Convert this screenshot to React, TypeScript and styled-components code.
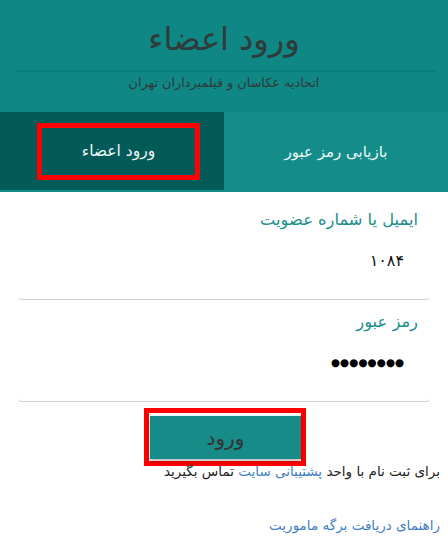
import styled, { createGlobalStyle } from "styled-components";

const GlobalStyle = createGlobalStyle`
	html, body {
		margin:0;
		padding:0;
		background:#fff;
	}
	body {
		font-family:"DejaVu Sans", "Noto Sans", sans-serif;
		direction:rtl;
	}
`;

const Page = styled.div`
	width:448px;
	height:544px;
	overflow:hidden;
	background:#fff;
`;

const Header = styled.header`
	background-color:#0f8785;
	height:112px;
	padding-top:17px;
	box-sizing:border-box;
	text-align:center;
`;

const Title = styled.h1`
	margin:0;
	font-size:32px;
	font-weight:400;
	line-height:44px;
	color:#2f3a3a;
`;

const Divider = styled.hr`
	margin:9px 13px 0 15px;
	border:none;
	border-top:2px solid #0a7c7a;
`;

const Subtitle = styled.p`
	margin:1px 0 0;
	font-size:12.8px;
	line-height:20px;
	color:#2f3a3a;
`;

const Tabs = styled.nav`
	display:grid;
	grid-template-columns:1fr 1fr;
	height:80px;
	border-bottom:2px solid #138c8a;
	box-sizing:border-box;
`;

const Tab = styled.div<{ $active?: boolean }>`
	display:flex;
	align-items:center;
	justify-content:center;
	background-color:${p => (p.$active ? "#035b59" : "#138c8a")};
	color:#eef7f7;
	font-size:15px;
	padding-left:${p => (p.$active ? "13px" : "0")};
	padding-top:${p => (p.$active ? "0" : "2px")};
`;

const Marked = styled.span`
	display:flex;
	align-items:center;
	justify-content:center;
	width:153px;
	height:47px;
	font-size:15.5px;
	border:5px solid #ff0000;
`;

const Form = styled.form`
	display:flex;
	flex-direction:column;
	padding:6px 18px 0;
`;

const Field = styled.div`
	display:flex;
	flex-direction:column;
	height:102px;
	padding:10px 12px 0;
	box-sizing:border-box;
	border-bottom:1px solid #cfcfcf;
	border-radius:0 0 4px 4px;
`;

const Label = styled.label`
	font-size:16.3px;
	line-height:24px;
	color:#1a8f8d;
`;

const Value = styled.div`
	margin-top:8px;
	height:40px;
	display:flex;
	align-items:center;
	padding-right:14px;
	font-size:16px;
	color:#111;
`;

const Dots = styled.span`
	font-size:10.5px;
	color:#000;
`;

const ButtonFrame = styled.div`
	align-self:center;
	margin-top:6px;
	margin-left:2px;
	padding:3px 0 2px 1px;
	border:5px solid #ff0000;
	display:flex;
`;

const SubmitBtn = styled.button`
	width:151px;
	height:43px;
	border:none;
	background-color:#168b87;
	box-shadow:0 2px 4px rgba(0,0,0,0.3);
	font-family:inherit;
	font-size:20px;
	color:#333;
	cursor:pointer;
`;

const Note = styled.p`
	margin:-3px 0 0;
	padding-right:8px;
	font-size:13.5px;
	line-height:16px;
	color:#222;
`;

const Link = styled.a`
	color:#3f7fc7;
	text-decoration:none;
`;

const Guide = styled.p`
	margin:36px 0 0;
	padding-right:8px;
	font-size:13.5px;
	line-height:20px;
`;

export default function App() {
	return (
		<>
			<GlobalStyle />
			<Page>
				<Header>
					<Title>ورود اعضاء</Title>
					<Divider />
					<Subtitle>اتحادیه عکاسان و فیلمبرداران تهران</Subtitle>
				</Header>
				<Tabs>
					<Tab>بازیابی رمز عبور</Tab>
					<Tab $active>
						<Marked>ورود اعضاء</Marked>
					</Tab>
				</Tabs>
				<Form onSubmit={e => e.preventDefault()}>
					<Field>
						<Label>ایمیل یا شماره عضویت</Label>
						<Value>۱۰۸۴</Value>
					</Field>
					<Field>
						<Label>رمز عبور</Label>
						<Value>
							<Dots>●●●●●●●●</Dots>
						</Value>
					</Field>
					<ButtonFrame>
						<SubmitBtn type="submit">ورود</SubmitBtn>
					</ButtonFrame>
				</Form>
				<Note>
					برای ثبت نام با واحد <Link href="#">پشتیبانی سایت</Link> تماس بگیرید
				</Note>
				<Guide>
					<Link href="#">راهنمای دریافت برگه ماموریت</Link>
				</Guide>
			</Page>
		</>
	);
}
